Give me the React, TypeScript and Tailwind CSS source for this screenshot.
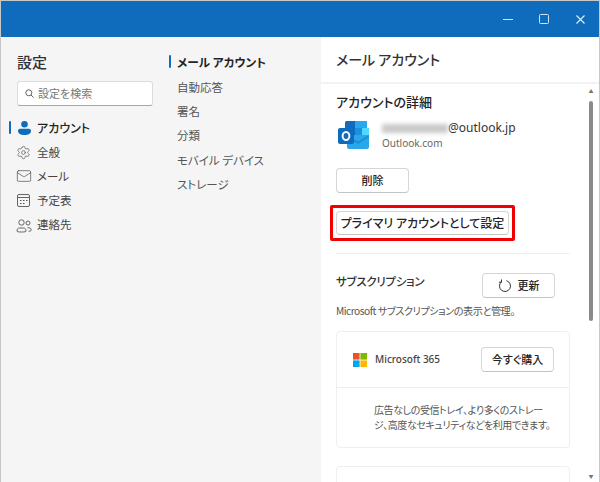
import { Settings, Mail } from "lucide-react";

const font = "font-['Noto_Sans_CJK_JP','Noto_Sans',sans-serif] [font-feature-settings:'palt']";
const latin = "font-['Noto_Sans',sans-serif]";

function SearchGlyph() {
  return (
    <svg width="9" height="9" viewBox="0 0 9 9" fill="none" stroke="#666" strokeWidth="1">
      <circle cx="3.800" cy="3.800" r="3" />
      <path d="M6 6l2.600 2.600" />
    </svg>
  );
}

function PersonIcon() {
  return (
    <svg width="13" height="14" viewBox="0 0 13 14" fill="#0f6cbd">
      <circle cx="6.500" cy="3.300" r="3.300" />
      <path d="M0 10c0-1.300 1-2.200 2.200-2.200h8.600c1.200 0 2.200.9 2.200 2.200 0 2.800-3 4-6.500 4S0 12.800 0 10z" />
    </svg>
  );
}

function CalendarIcon() {
  return (
    <svg width="15" height="15" viewBox="0 0 15 15" fill="none" stroke="#555" strokeWidth="0.9">
      <rect x="1.500" y="1.500" width="12" height="12" rx="1.500" />
      <path d="M1.500 4.500h12" />
      <path d="M4 7.500h1.500M7 7.500h1.500M10 7.500h1.500M4 10.500h1.500M7 10.500h1.500" strokeWidth="1.200" />
    </svg>
  );
}

function PeopleIcon() {
  return (
    <svg width="16" height="15" viewBox="0 0 16 15" fill="none" stroke="#555" strokeWidth="0.9">
      <circle cx="5.500" cy="4.500" r="2.700" />
      <path d="M1 13c0-1.800.9-3 2.200-3h4.600C9.100 10 10 11.200 10 13c0 .8-1.200 1-4.500 1S1 13.800 1 13z" />
      <circle cx="12" cy="5" r="2" />
      <path d="M11.500 9.800h1.800c1 0 1.900.9 1.900 2.200 0 .8-.8 1.300-2.700 1.300" />
    </svg>
  );
}

function RefreshIcon() {
  return (
    <svg width="14" height="14" viewBox="0 0 14 14" fill="none" stroke="#333" strokeWidth="1">
      <path d="M8.500 1.700A5.500 5.500 0 1 1 3.300 2.900" />
      <path d="M3.500 0.500v2.700H1" />
    </svg>
  );
}

function OutlookLogo() {
  return (
    <svg width="31" height="28" viewBox="0 0 31 28">
      <rect x="7" y="0" width="22" height="14" rx="1.500" fill="#0f6cbd" />
      <rect x="17" y="0" width="12" height="7" fill="#28a8ea" />
      <rect x="17" y="7" width="7" height="7" fill="#1c8fe0" />
      <rect x="24" y="7" width="7" height="7" fill="#50d9ff" />
      <path d="M9 14h22v12a2 2 0 0 1-2 2H11a2 2 0 0 1-2-2z" fill="#28a8ea" />
      <path d="M9 14l11 6.500L31 14v2L20 23 9 16z" fill="#0a5fa8" opacity="0.35" />
      <rect x="0" y="7" width="16" height="16" rx="2" fill="#0f6cbd" />
      <ellipse cx="8" cy="15" rx="3.400" ry="4" fill="none" stroke="#fff" strokeWidth="1.900" />
    </svg>
  );
}

function MicrosoftLogo() {
  return (
    <svg width="14" height="14" viewBox="0 0 14 14">
      <rect width="6.600" height="6.600" fill="#f25022" />
      <rect x="7.400" width="6.600" height="6.600" fill="#7fba00" />
      <rect y="7.400" width="6.600" height="6.600" fill="#00a4ef" />
      <rect x="7.400" y="7.400" width="6.600" height="6.600" fill="#ffb900" />
    </svg>
  );
}

const navItems = [
  { label: "全般", icon: <Settings size={15} strokeWidth={1.100} color="#555" /> },
  { label: "メール", icon: <Mail size={16} strokeWidth={1.100} color="#555" /> },
  { label: "予定表", icon: <CalendarIcon /> },
  { label: "連絡先", icon: <PeopleIcon /> },
];

const subItems = ["自動応答", "署名", "分類", "モバイル デバイス", "ストレージ"];

const btn = "flex items-center justify-center rounded-[4px] border border-[#d6d6d6] border-b-[#c4c4c4] bg-white text-[11px] font-medium text-[#242424]";

export default function App() {
  return (
    <div className={`flex h-[482px] w-[600px] flex-col overflow-hidden border-x border-t border-[#c8c8c8] bg-white ${font}`}>
      {/* Title bar */}
      <div className="flex h-[36px] shrink-0 items-center justify-end bg-[#0f6cbd]">
        <div className="flex w-[36.500px] justify-center">
          <span className="h-px w-[10px] bg-[#cfe3f5]" />
        </div>
        <div className="flex w-[36.500px] justify-center">
          <span className="h-[10px] w-[10px] rounded-[1.500px] border border-[#cfe3f5]" />
        </div>
        <div className="flex w-[36.500px] justify-center">
          <svg width="9" height="9" viewBox="0 0 9 9" stroke="#e4eff9" strokeWidth="1.100">
            <path d="M0.500 0.500l8 8M8.500 0.500l-8 8" />
          </svg>
        </div>
      </div>

      <div className="flex min-h-0 flex-1">
        {/* Settings nav */}
        <div className="w-[168px] shrink-0 bg-[#f5f5f5] pl-[16px] pt-[14px]">
          <h1 className="text-[15px] font-medium leading-[22px] text-[#333]">設定</h1>
          <div className="mt-[8px] flex h-[25px] w-[136px] items-center rounded-[3px] border border-[#dcdcdc] border-b-[#a8a8a8] bg-white pl-[7px] text-[11px] text-[#777]">
            <SearchGlyph />
            <span className="ml-[4px]">設定を検索</span>
          </div>
          <div className="relative -ml-[8px] mt-[10px] flex h-[24px] items-center pl-[9px]">
            <span className="absolute left-0 top-[5px] h-[13px] w-[2px] rounded bg-[#0f6cbd]" />
            <PersonIcon />
            <span className="ml-[6px] text-[12px] font-medium text-[#242424]">アカウント</span>
          </div>
          {navItems.map((item) => (
            <div key={item.label} className="-ml-[1px] flex h-[24.300px] items-center">
              <span className="flex w-[21px] items-center">{item.icon}</span>
              <span className="text-[11.500px] text-[#444]">{item.label}</span>
            </div>
          ))}
        </div>

        {/* Mail account sub nav */}
        <div className="w-[152px] shrink-0 bg-[#f5f5f5] pt-[13px]">
          <div className="relative flex h-[24px] items-center pl-[8px]">
            <span className="absolute left-0 top-[5px] h-[13px] w-[2px] rounded bg-[#0f6cbd]" />
            <span className="text-[11.700px] font-semibold text-[#242424]">メール アカウント</span>
          </div>
          <div className="pt-[1px]">
            {subItems.map((s) => (
              <div key={s} className="flex h-[24.400px] items-center pl-[8px] text-[11.500px] text-[#555]">{s}</div>
            ))}
          </div>
        </div>

        {/* Detail panel */}
        <div className="flex min-w-0 flex-1 flex-col bg-white">
          <div className="flex h-[47px] shrink-0 items-center border-b-2 border-[#f2f2f2] pl-[15px] text-[14px] font-medium text-[#333]">
            メール アカウント
          </div>
          <div className="flex min-h-0 flex-1">
            <div className="w-[262px] shrink-0 overflow-hidden pl-[15px] pt-[8px]">
              <h2 className="text-[13px] font-medium leading-[20px] text-[#242424]">アカウントの詳細</h2>
              <div className="mt-[8px] flex items-center">
                <span className="ml-[2px]"><OutlookLogo /></span>
                <div className="ml-[13px]">
                  <div className={`flex h-[16px] items-center text-[12px] text-[#333] ${latin}`}>
                    <span className="h-[9px] w-[66px] bg-[#c9c9c9] blur-[2px]" />
                    <span>@outlook.jp</span>
                  </div>
                  <div className={`text-[10px] leading-[14px] text-[#666] ${latin}`}>Outlook.com</div>
                </div>
              </div>
              <button className={`${btn} mt-[18px] h-[25px] w-[73px]`}>削除</button>
              <div className="-ml-[6px] mt-[12px] w-fit rounded-[2px] border-[3px] border-[#f00000] p-[3px]">
                <button className={`${btn} h-[24px] w-[173px] whitespace-nowrap text-[12px]`}>プライマリ アカウントとして設定</button>
              </div>
              <div className="mt-[12px] h-px w-[234px] bg-[#f0f0f0]" />
              <div className="mt-[19px] flex w-[219px] items-start justify-between">
                <h2 className="-mt-[2px] text-[11.500px] font-medium leading-[20px] tracking-[-0.3px] text-[#333]">サブスクリプション</h2>
                <button className={`${btn} h-[25px] w-[73px] gap-[6px]`}>
                  <RefreshIcon /> 更新
                </button>
              </div>
              <p className="mt-[5px] whitespace-nowrap text-[10.200px] leading-[16px] tracking-[-0.5px] text-[#555]">Microsoft サブスクリプションの表示と管理。</p>
              <div className="mt-[12px] w-[234px] rounded-[4px] border border-[#efefef]">
                <div className="flex h-[56px] items-center justify-between border-b border-[#efefef] pl-[16px] pr-[15px]">
                  <div className="flex items-center gap-[8px]">
                    <MicrosoftLogo />
                    <span className={`text-[10px] font-medium text-[#444] ${latin}`}>Microsoft 365</span>
                  </div>
                  <button className={`${btn} h-[25px] w-[73px]`}>今すぐ購入</button>
                </div>
                <p className="h-[59px] whitespace-nowrap pl-[37px] pt-[14px] text-[10px] leading-[15px] tracking-[-0.4px] text-[#555]">
                  広告なしの受信トレイ、より多くのストレー
                  <br />
                  ジ、高度なセキュリティなどを利用できます。
                </p>
              </div>
              <div className="mt-[18px] h-[40px] w-[234px] rounded-[4px] border border-[#efefef]" />
            </div>
            {/* Scrollbar */}
            <div className="flex w-[16px] flex-col items-center pt-[4px]">
              <span className="text-[5px] leading-[5px] text-[#777]">▲</span>
              <div className="mt-[8px] h-[220px] w-[4px] rounded-full bg-[#8a8a8a]" />
              <div className="flex-1" />
              <span className="mb-[4px] text-[5px] leading-[5px] text-[#777]">▼</span>
            </div>
          </div>
        </div>
      </div>
    </div>
  );
}
